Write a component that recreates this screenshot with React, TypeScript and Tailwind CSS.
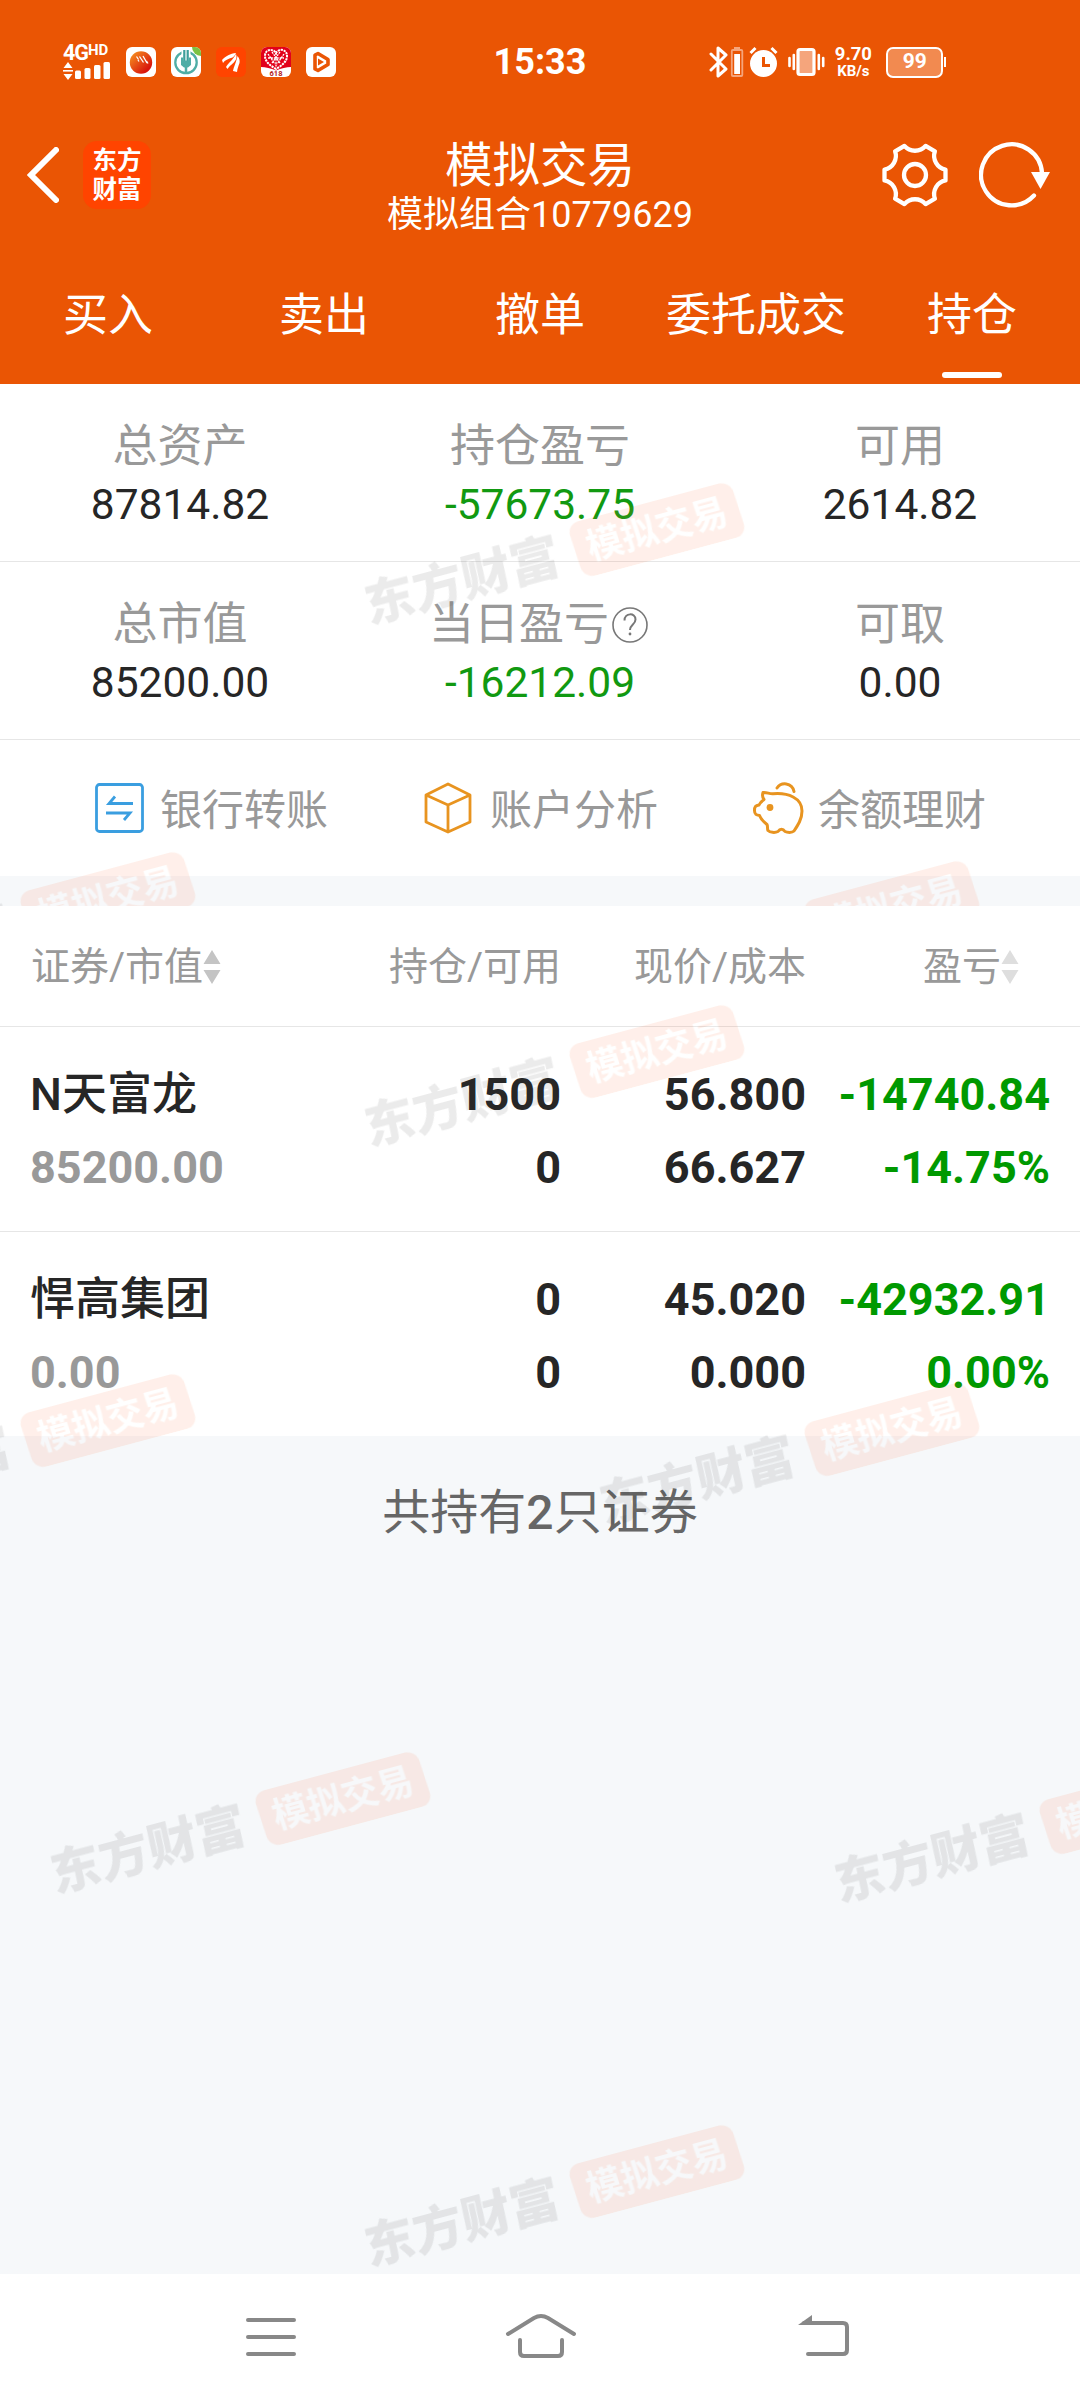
const watermarks = [
  { left: 361, top: 144 },
  { left: -188, top: 513 },
  { left: 596, top: 522 },
  { left: 47, top: 891 },
  { left: 831, top: 900 },
  { left: 361, top: 1264 },
];

const tabs = ["买入", "卖出", "撤单", "委托成交", "持仓"];

const summary = [
  [
    { label: "总资产", value: "87814.82" },
    { label: "持仓盈亏", value: "-57673.75", loss: true },
    { label: "可用", value: "2614.82" },
  ],
  [
    { label: "总市值", value: "85200.00" },
    { label: "当日盈亏", value: "-16212.09", loss: true, help: true },
    { label: "可取", value: "0.00" },
  ],
];

const positions = [
  {
    name: "N天富龙",
    marketValue: "85200.00",
    amount: "1500",
    available: "0",
    price: "56.800",
    cost: "66.627",
    profit: "-14740.84",
    percent: "-14.75%",
  },
  {
    name: "悍高集团",
    marketValue: "0.00",
    amount: "0",
    available: "0",
    price: "45.020",
    cost: "0.000",
    profit: "-42932.91",
    percent: "0.00%",
  },
];

function Watermark() {
  return (
    <div className="pointer-events-none absolute inset-0 overflow-hidden">
      {watermarks.map((w) => (
        <div
          key={`${w.left}-${w.top}`}
          className="absolute flex h-[58px] w-[384px] -rotate-[15deg] items-center justify-between whitespace-nowrap opacity-10"
          style={{ left: w.left, top: w.top }}
        >
          <span className="-ml-[2px] -skew-x-3 text-[50px] leading-[58px] font-black text-[#333]">
            东方财富
          </span>
          <span className="flex h-[57px] w-[169px] skew-x-3 items-center justify-center rounded-[12px] bg-[#ff5a1f] text-[36px] font-bold text-white">
            模拟交易
          </span>
        </div>
      ))}
    </div>
  );
}

function SignalIcon() {
  return (
    <div className="flex w-[47px] flex-col">
      <div className="flex h-[17px] items-start leading-none font-bold">
        <span className="-mt-[2px] text-[21.500px] tracking-[-1px]">4G</span>
        <span className="-mt-[1px] text-[15px]">HD</span>
      </div>
      <svg width="47" height="19" viewBox="0 0 47 19" fill="#fff">
        <path d="M5 1l4.500 6h-9zM5 19l4.500-6h-9z" />
        <path d="M0 9h10v1.600H0z" />
        <rect x="12" y="9.500" width="6" height="8.500" rx="1.500" />
        <rect x="21.500" y="7" width="6" height="11" rx="1.500" />
        <rect x="31" y="4" width="6.500" height="14" rx="1.500" />
        <rect x="40.500" y="1" width="6.500" height="17" rx="1.500" />
      </svg>
    </div>
  );
}

function AppIcons() {
  return (
    <div className="flex gap-[15px]">
      <svg width="30" height="30" viewBox="0 0 30 30">
        <defs>
          <linearGradient id="ball" x1="0" y1="0" x2="1" y2="1">
            <stop offset="0.100" stopColor="#f58a1f" />
            <stop offset="0.800" stopColor="#d8150c" />
          </linearGradient>
        </defs>
        <rect width="30" height="30" rx="6" fill="#fff" />
        <circle cx="15" cy="15.500" r="11.200" fill="url(#ball)" />
        <path
          d="M10.500 9.500l2 3M13.500 9.500l4 6M17 9l4 7M12 13l1 1.500M20.500 14l1.500 2.500"
          stroke="#fff"
          strokeWidth="1.300"
        />
      </svg>
      <svg width="30" height="30" viewBox="0 0 30 30">
        <rect width="30" height="30" rx="6" fill="#fff" />
        <path d="M21 0h3a6 6 0 016 6v3a9 9 0 01-9-9z" fill="#7cc243" />
        <circle cx="15" cy="15.500" r="10.700" fill="none" stroke="#4fada6" strokeWidth="2.300" />
        <path d="M15 3v9" stroke="#fff" strokeWidth="9" />
        <path d="M13.300 3v12M16.700 3v12" stroke="#3f9f9b" strokeWidth="2.200" />
        <path d="M10 10.500h2.200v3h5.600v-3H20v7.500l-3 2.500h-4l-3-2.500z" fill="#4fada6" />
        <path d="M15 18v9" stroke="#4fada6" strokeWidth="2.500" />
      </svg>
      <svg width="30" height="30" viewBox="0 0 30 30">
        <rect width="30" height="30" rx="6" fill="#ff4400" />
        <path
          d="M6 13c4-4 8-6.500 14-7-1 2.500-2 3.500-3.500 4.500C12 12 9 13 7 16zM10 20c3-5 7-7 10-13 1 3 .5 5-1 7-2 3-5 4-7.500 8zM17 24c1-5 3-8 4.500-15 2 2 2.500 5 2 7-1 3-2 5-2.500 9z"
          fill="#fff"
        />
      </svg>
      <svg width="30" height="30" viewBox="0 0 30 30">
        <rect width="30" height="30" rx="6" fill="#fff" />
        <path d="M6 0h18a6 6 0 016 6v14q-7 0-15 3.500Q7 20 0 20V6a6 6 0 016-6z" fill="#e2001a" />
        <path
          d="M15 22C10 19 4 15 4 9c0-7 8-8 11-3 3-5 11-4 11 3 0 6-6 10-11 13z"
          fill="none"
          stroke="#fff"
          strokeWidth="2"
          strokeDasharray="2.200 0.800"
        />
        <path
          d="M7 7l7 10M11 5l8 11M19 5l-8 11M23 7l-7 10M7 11h16M15 6v14"
          stroke="#fff"
          strokeWidth="1.300"
          strokeDasharray="2 0.900"
        />
        <text x="15" y="29.300" textAnchor="middle" fontSize="7.500" fontWeight="700" fill="#b3201a">
          618
        </text>
      </svg>
      <svg width="30" height="30" viewBox="0 0 30 30">
        <rect width="30" height="30" rx="6" fill="#fff" />
        <path
          d="M9 8v14l3 1.500 10-6v-5l-10-6z"
          fill="none"
          stroke="#ea5504"
          strokeWidth="3.600"
          strokeLinejoin="round"
        />
        <path d="M12 11.500v7l6-3.500z" fill="#ea5504" />
      </svg>
    </div>
  );
}

function StatusBar() {
  return (
    <div className="grid h-[124px] grid-cols-[1fr_auto_1fr] items-center">
      <div className="flex items-center gap-[16px] pl-[63px]">
        <SignalIcon />
        <AppIcons />
      </div>
      <div className="text-[36px] leading-none font-bold">15:33</div>
      <div className="flex h-[32px] items-center pl-[123px]">
        <svg width="118" height="32" viewBox="0 0 118 32" fill="none">
          <path
            d="M2 8l15 15-8 7V2l8 7L2 24"
            stroke="#fff"
            strokeWidth="3"
            strokeLinejoin="round"
            strokeLinecap="round"
          />
          <rect x="25" y="1" width="6" height="3" fill="#f5a57c" />
          <rect x="22.800" y="4" width="10.500" height="26" rx="1" stroke="#f5a57c" strokeWidth="1.800" />
          <rect x="25.200" y="8" width="5.800" height="20" fill="#fff" />
          <circle cx="54.500" cy="17.500" r="13.500" fill="#fff" />
          <path d="M41.500 7l5-5M67.500 7l-5-5" stroke="#fff" strokeWidth="3" />
          <path d="M54.500 11v8.500h6.500" stroke="#ea5504" strokeWidth="3" />
          <rect x="89" y="3.500" width="16" height="25" rx="2" fill="#f5a57c" stroke="#fff" strokeWidth="3.200" />
          <path
            d="M80.500 12v8M84.800 9v14M109.800 9v14M114.200 12v8"
            stroke="#fff"
            strokeWidth="2.600"
            strokeLinecap="round"
          />
        </svg>
        <div className="ml-[8px] flex w-[36px] flex-col items-center font-bold">
          <span className="text-[18.500px] leading-[17px]">9.70</span>
          <span className="text-[15px] leading-[16px]">KB/s</span>
        </div>
        <div className="ml-[15px] flex h-[31px] w-[57px] items-center justify-center rounded-[7px] border-[2.500px] border-white bg-[#f28a50] text-[21px] font-bold">
          99
        </div>
        <div className="ml-[1px] h-[10px] w-[2px] bg-white" />
      </div>
    </div>
  );
}

function TitleBar() {
  return (
    <div className="grid h-[102px] grid-cols-[1fr_auto_1fr] grid-rows-[102px] items-center">
      <div className="flex items-center gap-[24px] pl-[27px]">
        <svg width="32" height="56" viewBox="0 0 32 56" fill="none">
          <path d="M29 3L4 28l25 25" stroke="#fff" strokeWidth="6" strokeLinecap="round" />
        </svg>
        <div className="flex h-[68px] w-[68px] flex-col items-center justify-center rounded-[14px] bg-[#ff4400] text-[24.500px] leading-[29px] font-bold">
          <span>东方</span>
          <span>财富</span>
        </div>
      </div>
      <div className="flex flex-col items-center self-start pt-[16px]">
        <span className="text-[47.500px] leading-[52px]">模拟交易</span>
        <span className="text-[36px] leading-[46px]">模拟组合10779629</span>
      </div>
      <div className="flex items-center justify-end gap-[31px] pr-[29px]">
        <svg width="66" height="66" viewBox="0 0 66 66" fill="none" stroke="#fff" strokeWidth="4.300" strokeLinejoin="round">
          <path d="M63.500 27.600V38.400A14 14 0 0 0 52.900 56.700L43.600 62.100A14 14 0 0 0 22.400 62.100L13.100 56.700A14 14 0 0 0 2.500 38.400V27.600A14 14 0 0 0 13.100 9.300L22.400 3.900A14 14 0 0 0 43.600 3.900L52.900 9.300A14 14 0 0 0 63.500 27.600Z" />
          <circle cx="33" cy="33" r="11" />
        </svg>
        <svg width="72" height="66" viewBox="0 0 72 66" fill="none">
          <path d="M55 53.500A30.500 30.500 0 1 1 63 31" stroke="#fff" strokeWidth="4.300" strokeLinecap="round" />
          <path d="M52 30h19l-9.500 17z" fill="#fff" />
        </svg>
      </div>
    </div>
  );
}

function HelpIcon() {
  return (
    <svg className="mx-[3px]" width="36" height="36" viewBox="0 0 36 36" fill="none" stroke="#777" strokeWidth="1.600">
      <circle cx="18" cy="18" r="17" />
      <path d="M12.500 13.500c0-8 11-8 11-1 0 5-5.500 5-5.500 10.500" strokeWidth="2" />
      <circle cx="18" cy="27" r="1.400" fill="#777" stroke="none" />
    </svg>
  );
}

function SortIcon({ color }: { color: string }) {
  return (
    <svg className="-mt-[2px]" width="18" height="36" viewBox="0 0 18 36" fill={color}>
      <path d="M9 1l8.500 14H.5zM9 35l8.500-14H.5z" />
    </svg>
  );
}

function Actions() {
  return (
    <div className="flex h-[136px] items-center pl-[95px] text-[42px] text-[#999]">
      <div className="flex w-[329px] items-center gap-[16px]">
        <svg width="49" height="50" viewBox="0 0 49 50" fill="none" stroke="#3a9ee0" strokeWidth="2.800">
          <rect x="1.500" y="1.500" width="46" height="47" rx="3" />
          <path d="M38 20.500H14l6-7M11 30h24l-6 7" />
        </svg>
        <span className="pt-[4px]">银行转账</span>
      </div>
      <div className="flex w-[328px] items-center gap-[18px]">
        <svg width="48" height="52" viewBox="0 0 48 52" fill="none" stroke="#e89420" strokeWidth="2.800" strokeLinejoin="round">
          <path d="M24 2l22 11v27L24 50 2 40V13zM2 13l22 10 22-10M24 23v27" />
        </svg>
        <span className="pt-[4px]">账户分析</span>
      </div>
      <div className="flex items-center gap-[14px]">
        <svg width="52" height="52" viewBox="0 0 52 52" fill="none" stroke="#e89420" strokeWidth="3" strokeLinejoin="round" strokeLinecap="round">
          <path d="M11 10.500c4-.5 6 1.500 10 1.300 15-1.300 29 4.200 29 17.200 0 8-4 14-8 20-2 2-7 1.500-9 .5-2-3-5-3-7 0-3 1.500-8 1-10-1-1-2 0-4-1-6-4-3-6-5-7.500-9-3-.5-5-1-5-5 0-4 1-5 4.500-5.500 1-2.500 3-4 5-5.500-1.500-2-2-4-1-7z" />
          <path d="M25 6c4-6 15-6 17 3.500" />
          <circle cx="18" cy="25.500" r="3.400" fill="#e89420" stroke="none" />
        </svg>
        <span className="pt-[4px]">余额理财</span>
      </div>
    </div>
  );
}

export default function App() {
  return (
    <div className="flex h-[2400px] w-[1080px] flex-col overflow-hidden bg-white font-[Roboto,'Noto_Sans_CJK_SC',sans-serif] text-[#262626]">
      <header className="h-[384px] bg-[#ea5504] text-white">
        <StatusBar />
        <TitleBar />
        <nav className="grid h-[158px] grid-cols-5 text-[45px]">
          {tabs.map((tab) => (
            <div key={tab} className="flex flex-col items-center justify-between pt-[56px] pb-[6px] leading-[68px]">
              <span>{tab}</span>
              {tab === "持仓" && <span className="h-[6px] w-[60px] rounded-full bg-white" />}
            </div>
          ))}
        </nav>
      </header>

      <section className="relative h-[522px] bg-[#f6f8fa]">
        <div className="bg-white">
          {summary.map((row, i) => (
            <div key={i} className="grid h-[178px] grid-cols-3 border-b border-[#e6e6e6] pt-[30px]">
              {row.map((item) => (
                <div key={item.label} className="flex flex-col items-center">
                  <div className="flex h-[66px] items-center text-[45px] leading-[66px] text-[#999]">
                    {item.label}
                    {item.help && <HelpIcon />}
                  </div>
                  <div className={`-mt-[2px] text-[42.500px] leading-[54px] ${item.loss ? "text-[#119911]" : ""}`}>
                    {item.value}
                  </div>
                </div>
              ))}
            </div>
          ))}
          <Actions />
        </div>
        <Watermark />
      </section>

      <main className="relative h-[1368px] bg-[#f6f8fa]">
        <div className="bg-white">
          <div className="grid h-[121px] grid-cols-[301px_260px_245px_244px] items-center border-b border-[#e6e6e6] pt-[3px] text-[39px] text-[#999]">
            <div className="flex items-center pl-[31px]">
              证券/市值
              <SortIcon color="#c4c4c4" />
            </div>
            <div className="text-right">持仓/可用</div>
            <div className="text-right">现价/成本</div>
            <div className="flex items-center justify-end pr-[31px]">
              盈亏
              <SortIcon color="#dedede" />
            </div>
          </div>
          {positions.map((p) => (
            <div
              key={p.name}
              className="grid h-[205px] grid-cols-[301px_260px_245px_244px] border-b border-[#e6e6e6] pt-[31px] text-right text-[45px] leading-[73px] font-bold last:h-[204px] last:border-b-0"
            >
              <div className="pl-[30px] text-left">
                <div className="font-medium">{p.name}</div>
                <div className="text-[#999]">{p.marketValue}</div>
              </div>
              <div>
                <div>{p.amount}</div>
                <div>{p.available}</div>
              </div>
              <div>
                <div>{p.price}</div>
                <div>{p.cost}</div>
              </div>
              <div className="text-[#009900]">
                <div>{p.profit}</div>
                <div>{p.percent}</div>
              </div>
            </div>
          ))}
        </div>
        <div className="pt-[41px] text-center text-[48px] leading-[72px] text-[#666]">
          共持有<span className="font-medium">2</span>只证券
        </div>
        <Watermark />
      </main>

      <footer className="h-[126px] bg-white">
        <svg width="1080" height="126" viewBox="0 0 1080 126" fill="none" stroke="#888" strokeWidth="4" strokeLinecap="round">
          <path d="M248 46h46M248 63h46M248 80h46" />
          <path d="M508 60l26-16q7-4 14 0l26 16" />
          <path d="M520 66v12q0 4 4 4h34q4 0 4-4V66" />
          <path d="M808 80h35q4 0 4-4V53q0-4-4-4H804" />
          <path d="M798 51l14-10v10z" fill="#888" stroke="none" />
        </svg>
      </footer>
    </div>
  );
}
